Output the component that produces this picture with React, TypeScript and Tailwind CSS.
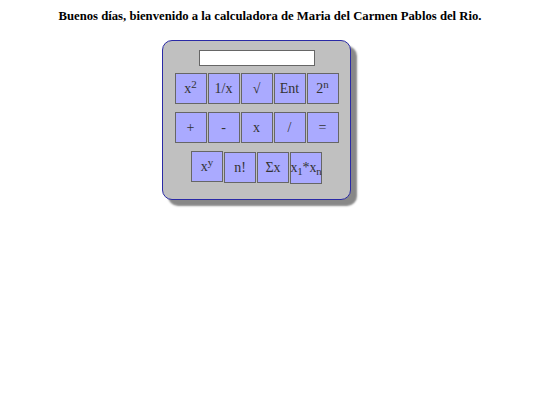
import React from "react";

const serif = { fontFamily: '"Liberation Serif", "Times New Roman", serif' } as React.CSSProperties;

function Btn({ children, className = "" }: { children: React.ReactNode; className?: string }) {
  return (
    <div
      className={
        "w-[32px] h-[31px] bg-[#aaaaff] border border-[#666666] flex items-center justify-center text-[14px] text-[#333333] leading-none " +
        className
      }
    >
      {children}
    </div>
  );
}

export default function App() {
  return (
    <div className="w-[540px] h-[405px] bg-white" style={serif}>
      <h1 className="text-center font-bold text-[12.7px] text-black pt-[9px] leading-[14px]">
        Buenos días, bienvenido a la calculadora de Maria del Carmen Pablos del Rio.
      </h1>
      <div className="ml-[162px] mt-[17px] w-[189px] h-[160px] bg-[#c0c0c0] border-[1.5px] border-[#2a2aa6] rounded-[10px] shadow-[6px_6px_2px_#888888] flex flex-col items-center pt-[8.5px]">
        <div className="w-[116px] h-[16px] bg-white border border-[#666666]" />
        <div className="flex gap-[1px] mt-[7.5px]">
          <Btn>
            x<sup className="text-[11px] relative -top-[5px]">2</sup>
          </Btn>
          <Btn>1/x</Btn>
          <Btn>√</Btn>
          <Btn>Ent</Btn>
          <Btn>
            2<sup className="text-[11px] relative -top-[5px]">n</sup>
          </Btn>
        </div>
        <div className="flex gap-[1px] mt-[8px]">
          <Btn>+</Btn>
          <Btn>-</Btn>
          <Btn>x</Btn>
          <Btn>/</Btn>
          <Btn>=</Btn>
        </div>
        <div className="flex gap-[1px] mt-[8px] items-start">
          <Btn>
            x<sup className="text-[11px] relative -top-[5px]">y</sup>
          </Btn>
          <Btn className="mt-[1px]">n!</Btn>
          <Btn className="mt-[1px]">Σx</Btn>
          <Btn className="mt-[1px] h-[32px] tracking-[-0.2px]">
            x<sub className="text-[11px] relative top-[3px]">1</sub>*x<sub className="text-[11px] relative top-[3px]">n</sub>
          </Btn>
        </div>
      </div>
    </div>
  );
}
